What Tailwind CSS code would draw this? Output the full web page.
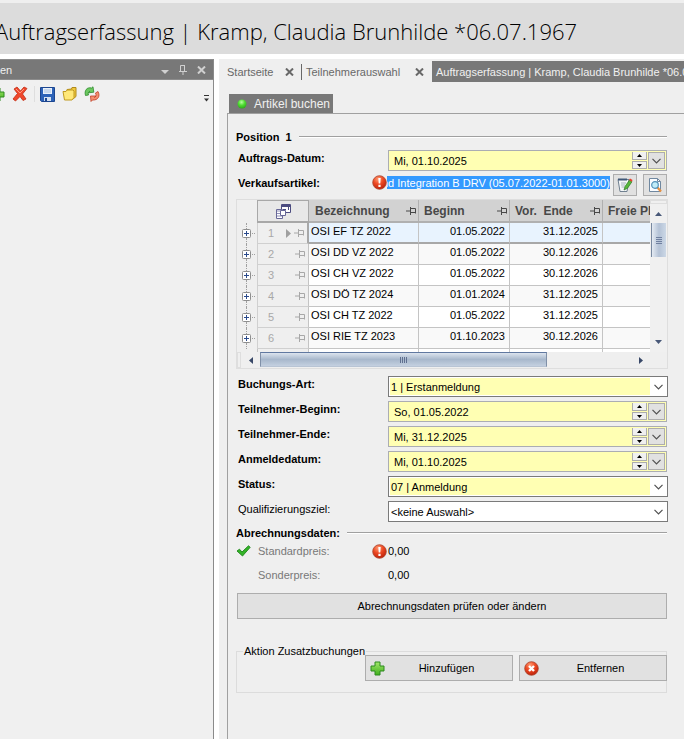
<!DOCTYPE html>
<html lang="de">
<head>
<meta charset="utf-8">
<title>Auftragserfassung</title>
<script src="https://cdn.jsdelivr.net/npm/@tailwindcss/browser@4"></script>
</head>
<body class="min-h-screen flex flex-col bg-white text-black text-[11px] leading-4 font-['Liberation_Sans',Arial,sans-serif] overflow-x-hidden">
<svg class="absolute w-0 h-0" aria-hidden="true">
  <defs>
    <linearGradient id="gGreen" x1="0" y1="0" x2="0" y2="1"><stop offset="0" stop-color="#a4e86c"/><stop offset="1" stop-color="#3fae1c"/></linearGradient>
    <radialGradient id="gRed" cx=".4" cy=".25" r=".8"><stop offset="0" stop-color="#ff9c74"/><stop offset=".45" stop-color="#ee4a24"/><stop offset="1" stop-color="#b81e08"/></radialGradient>
    <radialGradient id="gDot" cx=".45" cy=".3" r=".7"><stop offset="0" stop-color="#b6ffa0"/><stop offset=".5" stop-color="#4fdc32"/><stop offset="1" stop-color="#2fa81c"/></radialGradient>
  </defs>
  <symbol id="chev" viewBox="0 0 9 6"><path d="M.5.8 4.500 4.800 8.500.8" fill="none" stroke="#505050" stroke-width="1.200"/></symbol>
  <symbol id="pin" viewBox="0 0 10 8"><path d="M0 4h4M4.500 0v8M5 1.500h4.500v5M5 5.500h4.500" fill="none" stroke="currentColor"/></symbol>
  <symbol id="close" viewBox="0 0 9 8"><path d="M1 .5 8 7.500M8 .5 1 7.500" stroke="currentColor" stroke-width="2" fill="none"/></symbol>
  <symbol id="alert" viewBox="0 0 15 15"><circle cx="7.500" cy="7.500" r="6.800" fill="url(#gRed)" stroke="#a8432c" stroke-width=".8"/><path d="M6.300 3h2.400l-.4 5.600H6.700zM6.400 9.800h2.200v2.200H6.400z" fill="#fff"/></symbol>
  <symbol id="plus" viewBox="0 0 15 15"><path d="M5 1h5v4h4v5h-4v4H5v-4H1V5h4z" fill="url(#gGreen)" stroke="#2d8a1e"/></symbol>
  <symbol id="expand" viewBox="0 0 9 9"><rect x=".5" y=".5" width="8" height="8" rx="1" fill="#fff" stroke="#8e8e8e"/><path d="M2 4.500h5M4.500 2v5" stroke="#2a4a8c"/></symbol>
</svg>

<header class="h-[54px] shrink-0 border-t-3 border-[#efefef] bg-[#dcdcdc] overflow-hidden">
  <h1 class="-ml-[5px] pt-3 font-['Open_Sans',sans-serif] font-light text-[22px] leading-8 whitespace-nowrap">Auftragserfassung | Kramp, Claudia Brunhilde *06.07.1967</h1>
</header>

<div class="flex grow mt-[5px] gap-[5px]">
  <aside class="w-[214px] shrink-0 bg-[#f0f0f0] border-r border-[#8a8a8a] overflow-hidden">
    <div class="h-[21px] flex items-center justify-between bg-[#787878] border-y border-[#8c8c8c] text-[#f0f0f0] pr-[7px]">
      <span class="text-[11px]">en</span>
      <div class="flex items-center gap-2.5 text-[#d0d0d0]">
        <button aria-label="Menü"><svg class="w-2 h-3" viewBox="0 0 8 12"><path d="M0 6h8L4 10z" fill="currentColor"/></svg></button>
        <button aria-label="Anheften"><svg class="w-2 h-3" viewBox="0 0 8 12"><path d="M1.500 7V1.500h4V7M5.500 1v6M0 7.500h8M4 8v3" stroke="currentColor" fill="none"/></svg></button>
        <button aria-label="Schließen"><svg class="w-[9px] h-2"><use href="#close"/></svg></button>
      </div>
    </div>
    <div class="h-7 flex items-center -ml-[10px] pr-1">
      <button aria-label="Neu"><svg class="w-[15px] h-[15px]"><use href="#plus"/></svg></button>
      <button aria-label="Löschen" class="ml-[7px]"><svg class="w-4 h-4" viewBox="0 0 16 16"><path d="M2 3 5 1l3.500 4L12 1l3 1.500L10.500 8l3.500 5-3 1.500L8 10.500 3.500 15 1 13l4.500-5.500z" fill="#f0482c" stroke="#c02c14" stroke-width=".8"/><path d="M4 3l4 4 4-4" stroke="#ff9a80" fill="none"/></svg></button>
      <span class="ml-1.5 h-4 w-px bg-[#dedede]"></span>
      <button aria-label="Speichern" class="ml-[5px]"><svg class="w-[15px] h-[15px]" viewBox="0 0 15 15"><path d="M.5.5h14v14h-13l-1-1z" fill="#2c62b8" stroke="#1c4690"/><path d="M3 1h9v6H3z" fill="#e8f0fa"/><path d="M4 3h7M4 5h7" stroke="#a8c0e0"/><path d="M4 10h7v4H4z" fill="#d4e0f0"/><path d="M5 11h2v3H5z" fill="#1c4690"/></svg></button>
      <button aria-label="Öffnen" class="ml-[7px]"><svg class="w-4 h-4" viewBox="0 0 16 16"><path d="M5 3.500 9.500 3l.5-1.500h4v9L11 13z" fill="#f0c83c" stroke="#b08a1c"/><path d="M1 5.500h3L5 4h6l1 1v6.500L10 14H2.500z" fill="#ffe878" stroke="#c09a20"/></svg></button>
      <button aria-label="Aktualisieren" class="ml-1.5"><svg class="w-4 h-4" viewBox="0 0 16 16"><path d="M1.500 9.500C0 4.500 3 .8 7.500 2L9 .8l.8 5.400-5.300.6 1.300-1.500C4.300 5.500 3.800 7.500 4.500 9z" fill="#6cc860" stroke="#2c8a2c" stroke-width=".8"/><path d="M14 5.500c2.500 4.500 0 9-5.500 8.500L7 15.500 6.500 10h5.300l-1.300 1.500c1.500-.5 2-2.500 1-4.500z" fill="#f49070" stroke="#c03c24" stroke-width=".8"/></svg></button>
      <button aria-label="Weitere" class="ml-auto pt-2"><svg class="w-[5px] h-[7px]" viewBox="0 0 5 7"><path d="M0 .5h5" stroke="#333"/><path d="M0 3.500h5L2.500 6.500z" fill="#333"/></svg></button>
    </div>
  </aside>

  <main class="grow min-w-0 bg-[#efefef] flex flex-col overflow-hidden">
    <nav class="flex items-center h-[21px] mt-0.5 pl-2 whitespace-nowrap text-[#686868] shrink-0">
      <a href="#" class="w-12 shrink-0">Startseite</a>
      <button aria-label="Startseite schließen" class="ml-[10px] shrink-0"><svg class="w-[9px] h-2"><use href="#close"/></svg></button>
      <span class="ml-[7px] w-px h-4 shrink-0 bg-[#686868]"></span>
      <a href="#" class="ml-1 w-[97px] shrink-0">Teilnehmerauswahl</a>
      <button aria-label="Teilnehmerauswahl schließen" class="ml-3 shrink-0"><svg class="w-[9px] h-2"><use href="#close"/></svg></button>
      <a href="#" class="ml-2 h-full grow shrink-0 flex items-center pl-1 bg-[#787878] text-[#f0f0f0]">Auftragserfassung | Kramp, Claudia Brunhilde *06.07.1967</a>
    </nav>

    <div class="mt-3 ml-2.5 flex shrink-0">
      <button class="h-[19px] w-[104px] bg-[#787878] text-[#f0f0f0] text-xs leading-4 flex items-center pl-2 gap-[7px] whitespace-nowrap"><svg class="w-[10px] h-[10px] shrink-0" viewBox="0 0 10 10"><circle cx="5" cy="5" r="4.500" fill="url(#gDot)"/></svg><span>Artikel buchen</span></button>
    </div>

    <form class="ml-2 grow border-t border-l border-[#a0a0a0] pl-2 pr-[17px] pt-[15px] pb-4">
      <h2 class="flex items-center gap-[7px] font-bold text-[11px] h-4">Position&nbsp; 1<span class="grow h-0.5 bg-white border-t border-[#a0a0a0]"></span></h2>

      <div class="flex mt-[5px] h-[21px]">
        <label for="d1" class="w-[152px] shrink-0 pl-0.5 font-bold">Auftrags-Datum:</label>
        <div class="grow min-w-0 flex items-center border border-[#abadb3] bg-[#ffffb3] pr-px h-full">
          <input id="d1" value="Mi, 01.10.2025" class="grow min-w-0 bg-transparent pl-[5px] outline-none">
          <span class="w-[15px] mr-px flex flex-col gap-px"><button type="button" aria-label="Höher" class="h-2 bg-[#f0f0f0] border border-t-0 border-[#adadad] flex items-center justify-center"><svg class="w-[5px] h-[3px]" viewBox="0 0 5 3"><path d="M0 3h5L2.500 0z"/></svg></button><button type="button" aria-label="Niedriger" class="h-2 bg-[#f0f0f0] border border-[#adadad] flex items-center justify-center"><svg class="w-[5px] h-[3px]" viewBox="0 0 5 3"><path d="M0 0h5L2.500 3z"/></svg></button></span>
          <button type="button" aria-label="Kalender" class="w-[17px] h-[17px] bg-[#e1e1e1] border border-[#adadad] flex items-center justify-center"><svg class="w-[9px] h-1.5"><use href="#chev"/></svg></button>
        </div>
      </div>

      <div class="flex mt-[3px] h-[22px]">
        <label for="art" class="w-[136px] shrink-0 pl-0.5 pt-px font-bold">Verkaufsartikel:</label>
        <svg class="w-[15px] h-[15px] shrink-0 mt-px"><use href="#alert"/></svg>
        <input id="art" value="nd Integration B DRV (05.07.2022-01.01.3000)" class="grow min-w-0 h-[13px] mt-0.5 bg-[#3399ff] text-white text-right outline-none">
        <button type="button" aria-label="Bearbeiten" class="ml-[3px] w-6 shrink-0 h-[22px] bg-[#e1e1e1] border border-[#adadad] flex items-center justify-center"><svg class="w-4 h-4" viewBox="0 0 16 16"><path d="M1 2.500h11L10 14.500H3z" fill="#f4f6f8" stroke="#708090"/><path d="M1 2.500h9" stroke="#405878" stroke-width="2"/><path d="M4 6h5M4 8h4M4.500 10h3" stroke="#a8b4c0"/><path d="M7 13l1-3.500L12.500 3l2.500 1.700-4.500 6.500z" fill="#58b83c" stroke="#2c7a24" stroke-width=".7"/><path d="M12 3l1-1.500 2.600 1.600-1 1.700z" fill="#e8402c"/></svg></button>
        <button type="button" aria-label="Suchen" class="ml-1.5 w-6 shrink-0 h-[22px] bg-[#e1e1e1] border border-[#adadad] flex items-center justify-center"><svg class="w-4 h-4" viewBox="0 0 16 16"><path d="M2.500 1.500h8l3 3v10h-11z" fill="#fafcff" stroke="#7088a0"/><path d="M10.500 1.500v3h3" fill="none" stroke="#7088a0"/><path d="M10.500 10.500l3.500 4" stroke="#e89040" stroke-width="2.200"/><circle cx="8" cy="8" r="3.300" fill="#c0ecf8" stroke="#5090b8" stroke-width="1.200"/></svg></button>
      </div>

      <div class="mt-[3px] -mr-px border border-[#dedede] bg-[#efefef]">
        <div class="flex h-[152px]">
          <div class="grow min-w-0 overflow-hidden">
            <table class="w-full table-fixed border-separate border-spacing-0">
              <colgroup><col class="w-5"><col class="w-[52px]"><col class="w-[110px]"><col class="w-[91px]"><col class="w-[93px]"><col></colgroup>
              <thead>
                <tr class="h-[23px] text-[#484848] text-xs text-left whitespace-nowrap">
                  <td></td>
                  <th class="p-0 border border-b-2 border-[#a8a8a8] bg-[#e8e8e8]"><svg class="mx-auto w-[15px] h-[15px]" viewBox="0 0 15 15"><path d="M5.500.5h9v8h-9z" fill="#fff" stroke="#4c4c80"/><path d="M6 2h8" stroke="#4c4c80" stroke-width="2"/><path d="M7 5.500h3M12.500 3v3" stroke="#4c4c80"/><path d="M.5 5.500h6v9h-6z" fill="#fff" stroke="#686898"/><path d="M1 7h5M1 9.500h5M1 12h5" stroke="#9090b8"/><path d="M4.500 6.500h5v5h-5z" fill="#fff" stroke="#686898"/></svg></th>
                  <th class="p-0 border-b-2 border-r border-[#b0b0b0] bg-[#d2d2d2]"><div class="flex items-center justify-between pl-1.5 pr-0.5">Bezeichnung<svg class="w-[10px] h-2"><use href="#pin"/></svg></div></th>
                  <th class="p-0 border-b-2 border-r border-[#b0b0b0] bg-[#d2d2d2]"><div class="flex items-center justify-between pl-[5px] pr-0.5">Beginn<svg class="w-[10px] h-2"><use href="#pin"/></svg></div></th>
                  <th class="p-0 border-b-2 border-r border-[#b0b0b0] bg-[#d2d2d2]"><div class="flex items-center justify-between pl-[5px] pr-0.5">Vor.&nbsp; Ende<svg class="w-[10px] h-2"><use href="#pin"/></svg></div></th>
                  <th class="p-0 border-b-2 border-[#b0b0b0] bg-[#d2d2d2] overflow-hidden pl-[5px]">Freie Pl</th>
                </tr>
              </thead>
              <tbody id="rows"></tbody>
            </table>
          </div>
          <div class="w-[17px] shrink-0 flex flex-col items-center bg-[#f0f0f0]">
            <span class="h-1 w-full border border-[#dedede]"></span>
            <button type="button" aria-label="Nach oben" class="h-[19px] flex items-center"><svg class="w-[7px] h-1" viewBox="0 0 7 4"><path d="M0 4h7L3.500 0z" fill="#485878"/></svg></button>
            <span class="w-[15px] h-[34px] border-l border-[#7888a0] bg-linear-to-r from-[#e4eaf2] via-[#b4c2d6] to-[#ccd8e6] flex flex-col items-center justify-center gap-px"><i class="w-1.5 h-px bg-[#7080a0]"></i><i class="w-1.5 h-px bg-[#7080a0]"></i><i class="w-1.5 h-px bg-[#7080a0]"></i><i class="w-1.5 h-px bg-[#7080a0]"></i></span>
            <button type="button" aria-label="Nach unten" class="mt-auto h-5 flex items-center"><svg class="w-[7px] h-1" viewBox="0 0 7 4"><path d="M0 0h7L3.500 4z" fill="#485878"/></svg></button>
          </div>
        </div>
        <div class="flex h-4 items-stretch pr-4">
          <span class="w-1 border border-[#dedede]"></span>
          <button type="button" aria-label="Nach links" class="w-[19px] flex items-center justify-center"><svg class="w-1 h-[7px]" viewBox="0 0 4 7"><path d="M4 0v7L0 3.500z" fill="#384868"/></svg></button>
          <span class="w-[72%] max-w-[287px] h-[15px] border border-t-[#6078a0] border-x-[#8090a8] border-b-[#b8c4d4] bg-linear-to-b from-[#dce4ee] via-[#a8b8cc] to-[#c4d0e0] flex items-center justify-center gap-px"><i class="w-px h-1.5 bg-[#607090]"></i><i class="w-px h-1.5 bg-[#607090]"></i><i class="w-px h-1.5 bg-[#607090]"></i><i class="w-px h-1.5 bg-[#607090]"></i></span>
          <button type="button" aria-label="Nach rechts" class="ml-auto w-5 flex items-center justify-center"><svg class="w-1 h-[7px]" viewBox="0 0 4 7"><path d="M0 0v7L4 3.500z" fill="#384868"/></svg></button>
        </div>
      </div>

      <div id="fields" class="mt-[7px] flex flex-col gap-1"></div>

      <h2 class="flex items-center gap-[7px] font-bold text-[11px] h-4 mt-[3px]">Abrechnungsdaten:<span class="grow h-0.5 bg-white border-t border-[#a0a0a0]"></span></h2>
      <div class="flex items-center h-5">
        <svg class="w-[15px] h-3 shrink-0" viewBox="0 0 15 12"><path d="M1 6 3.500 4.200 6 7 12.500.8l1.700 1.500L6.500 11z" fill="#34b428" stroke="#1c8418" stroke-width=".9"/></svg>
        <span class="w-[121px] pl-[7px] text-[#787878]">Standardpreis:</span>
        <svg class="w-[15px] h-[15px] shrink-0 mr-px"><use href="#alert"/></svg>
        <output>0,00</output>
      </div>
      <div class="flex items-center h-4 mt-1.5">
        <span class="w-[152px] pl-[22px] text-[#787878]">Sonderpreis:</span>
        <output>0,00</output>
      </div>
      <button type="button" class="mt-2.5 ml-px block w-[calc(100%-1px)] h-[26px] bg-[#e1e1e1] border border-[#adadad]">Abrechnungsdaten prüfen oder ändern</button>

      <fieldset class="mt-6 border border-[#dcdcdc] h-[50px] pl-[128px]">
        <legend class="-ml-[122px] px-px whitespace-nowrap">Aktion Zusatzbuchungen</legend>
        <div class="flex gap-1.5 -mt-1 -mr-px">
          <button type="button" class="flex-1 h-[26px] bg-[#e1e1e1] border border-[#adadad] flex items-center pl-1 pr-1"><svg class="w-[15px] h-[15px]"><use href="#plus"/></svg><span class="grow">Hinzufügen</span></button>
          <button type="button" class="flex-1 h-[26px] bg-[#e1e1e1] border border-[#adadad] flex items-center pl-1 pr-1"><svg class="w-[15px] h-[15px]" viewBox="0 0 15 15"><circle cx="7.500" cy="7.500" r="6.800" fill="url(#gRed)" stroke="#a8432c" stroke-width=".8"/><path d="M5 5l5 5M10 5l-5 5" stroke="#fff" stroke-width="2.400"/></svg><span class="grow">Entfernen</span></button>
        </div>
      </fieldset>
    </form>
  </main>
</div>

<script>
  const rows = [
    ['OSI EF TZ 2022', '01.05.2022', '31.12.2025'],
    ['OSI DD VZ 2022', '01.05.2022', '30.12.2026'],
    ['OSI CH VZ 2022', '01.05.2022', '30.12.2026'],
    ['OSI DÖ TZ 2024', '01.01.2024', '31.12.2025'],
    ['OSI CH TZ 2022', '01.05.2022', '31.12.2025'],
    ['OSI RIE TZ 2023', '01.10.2023', '30.12.2026'],
  ];
  const rowHtml = (r, i) => {
    const bg = i === 0 ? 'bg-[#e8f3fe]' : i % 2 ? 'bg-[#f9f9f9]' : 'bg-white';
    const line = i === 0 ? 'border-b-2 border-b-[#a8a8a8]' : 'border-b border-b-[#c4c4c4]';
    const cell = `p-0 h-[21px] align-top leading-4 border-r border-r-[#c4c4c4] ${bg} ${line}`;
    return `<tr>
      <td class="p-0"><div class="h-[21px] flex items-center pl-[5px]"><div class="h-full flex flex-col items-center"><span class="grow border-l border-dotted border-[#a0a0a0]"></span><button type="button" aria-label="Aufklappen" class="block h-[9px]"><svg class="w-[9px] h-[9px] block"><use href="#expand"/></svg></button><span class="grow border-l border-dotted border-[#a0a0a0]"></span></div><span class="grow mr-0.5 ml-px border-t border-dotted border-[#a0a0a0]"></span></div></td>
      <td class="p-0 border-b border-l border-[#d0d0d0] ${i === 0 ? 'border-r-2 border-r-[#a8a8a8]' : 'border-r border-r-[#c4c4c4]'}"><div class="flex items-center text-[#a8a8a8] pl-2.5 pr-[3px]"><span class="grow">${i + 1}</span>${i === 0 ? '<svg class="w-[5px] h-[9px] mr-[3px]" viewBox="0 0 5 9"><path d="M0 0v9l5-4.500z" fill="#a0a0a0"/></svg>' : ''}<svg class="w-[10px] h-2"><use href="#pin"/></svg></div></td>
      <td class="${cell} pl-0.5">${r[0]}</td>
      <td class="${cell} text-right pr-1">${r[1]}</td>
      <td class="${cell} text-right pr-1">${r[2]}</td>
      <td class="${cell} border-r-0"></td></tr>`;
  };
  document.getElementById('rows').innerHTML = rows.map(rowHtml).join('') +
    '<tr class="h-2"><td></td><td class="border-x border-[#c4c4c4]"></td><td class="bg-white border-r border-[#c4c4c4]"></td><td class="bg-white border-r border-[#c4c4c4]"></td><td class="bg-white border-r border-[#c4c4c4]"></td><td class="bg-white"></td></tr>';

  const arrows = `<span class="w-[15px] mr-px flex flex-col gap-px"><button type="button" aria-label="Höher" class="h-2 bg-[#f0f0f0] border border-t-0 border-[#adadad] flex items-center justify-center"><svg class="w-[5px] h-[3px]" viewBox="0 0 5 3"><path d="M0 3h5L2.500 0z"/></svg></button><button type="button" aria-label="Niedriger" class="h-2 bg-[#f0f0f0] border border-[#adadad] flex items-center justify-center"><svg class="w-[5px] h-[3px]" viewBox="0 0 5 3"><path d="M0 0h5L2.500 3z"/></svg></button></span>
    <button type="button" aria-label="Kalender" class="w-[17px] h-[17px] bg-[#e1e1e1] border border-[#adadad] flex items-center justify-center"><svg class="w-[9px] h-1.5"><use href="#chev"/></svg></button>`;
  const fields = [
    ['Buchungs-Art:', 'select', '1 | Erstanmeldung', true],
    ['Teilnehmer-Beginn:', 'date', 'So, 01.05.2022', true],
    ['Teilnehmer-Ende:', 'date', 'Mi, 31.12.2025', true],
    ['Anmeldedatum:', 'date', 'Mi, 01.10.2025', true],
    ['Status:', 'select', '07 | Anmeldung', true],
    ['Qualifizierungsziel:', 'select', '<keine Auswahl>', false],
  ];
  document.getElementById('fields').innerHTML = fields.map(([name, type, value, required], i) => {
    const text = value.replace('<', '&lt;').replace('>', '&gt;');
    const control = type === 'date'
      ? `<div class="grow min-w-0 flex items-center border border-[#abadb3] bg-[#ffffb3] pr-px h-full"><input id="f${i}" value="${text}" class="grow min-w-0 bg-transparent pl-[5px] outline-none">${arrows}</div>`
      : `<div class="relative grow min-w-0 flex border border-[#7a7a7a] bg-white -mr-px p-px h-full"><select id="f${i}" class="appearance-none grow min-w-0 pl-px mr-4 outline-none ${required ? 'bg-[#ffffb3]' : 'bg-white'}"><option>${text}</option></select><svg class="absolute right-1 top-[7px] w-[9px] h-1.5 pointer-events-none"><use href="#chev"/></svg></div>`;
    return `<div class="flex h-[21px]"><label for="f${i}" class="w-[152px] shrink-0 pl-0.5 ${required ? 'font-bold' : ''}">${name}</label>${control}</div>`;
  }).join('');

  // Keep the end of a long article name in view
  const art = document.getElementById('art');
  art.scrollLeft = art.scrollWidth;
</script>
</body>
</html>
